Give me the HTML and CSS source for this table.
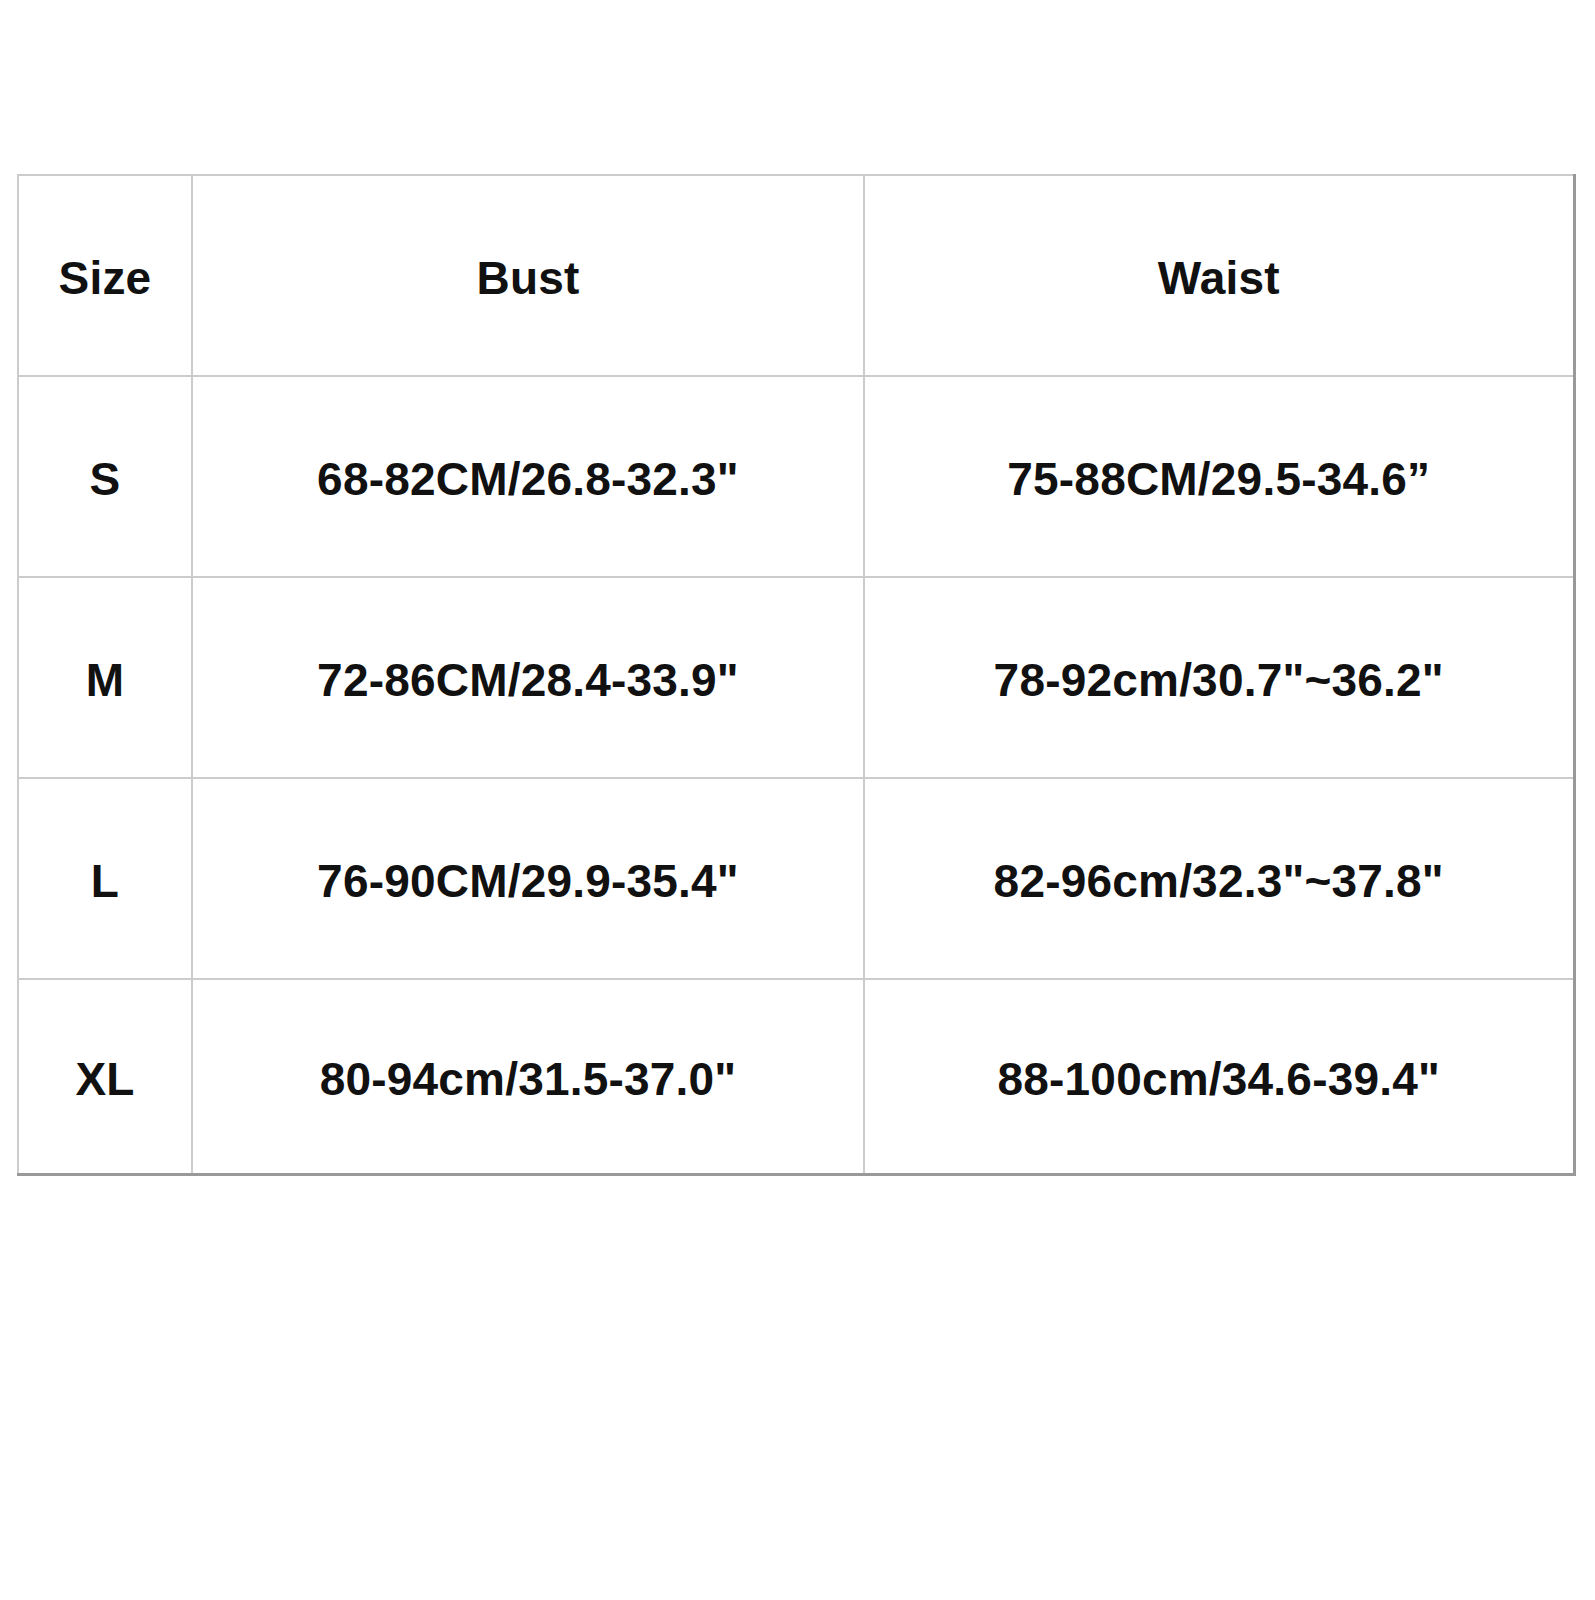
FILE: index.html
```html
<!DOCTYPE html>
<html>
<head>
<meta charset="utf-8">
<link rel="stylesheet" href="styles.css">
</head>
<body>
<table class="size-table">
  <colgroup>
    <col class="c-size">
    <col class="c-bust">
    <col class="c-waist">
  </colgroup>
  <tr class="row">
    <td>Size</td><td>Bust</td><td>Waist</td>
  </tr>
  <tr class="row">
    <td>S</td><td>68-82CM/26.8-32.3"</td><td>75-88CM/29.5-34.6”</td>
  </tr>
  <tr class="row">
    <td>M</td><td>72-86CM/28.4-33.9"</td><td>78-92cm/30.7"~36.2"</td>
  </tr>
  <tr class="row">
    <td>L</td><td>76-90CM/29.9-35.4"</td><td>82-96cm/32.3"~37.8"</td>
  </tr>
  <tr class="row last">
    <td>XL</td><td>80-94cm/31.5-37.0"</td><td>88-100cm/34.6-39.4"</td>
  </tr>
</table>
</body>
</html>
```

FILE: styles.css
```css
html, body {
  margin: 0;
  padding: 0;
  background: #ffffff;
}
body {
  padding-top: 174px;
  padding-left: 17px;
}
.size-table {
  border-collapse: collapse;
  table-layout: fixed;
  width: 1556px;
  font-family: "Liberation Sans", Arial, sans-serif;
  font-weight: bold;
  font-size: 46px;
  letter-spacing: 0.2px;
  color: #111111;
}
.c-size { width: 174px; }
.c-bust { width: 672px; }
.c-waist { width: 710px; }
.size-table td {
  border: 2px solid #cccccc;
  text-align: center;
  vertical-align: middle;
  padding: 5px 0 0 0;
  height: 194px;
}
.size-table .last td {
  height: 188px;
  border-bottom: 3px solid #999999;
}
.size-table td:last-child {
  border-right: 3px solid #999999;
}
```
